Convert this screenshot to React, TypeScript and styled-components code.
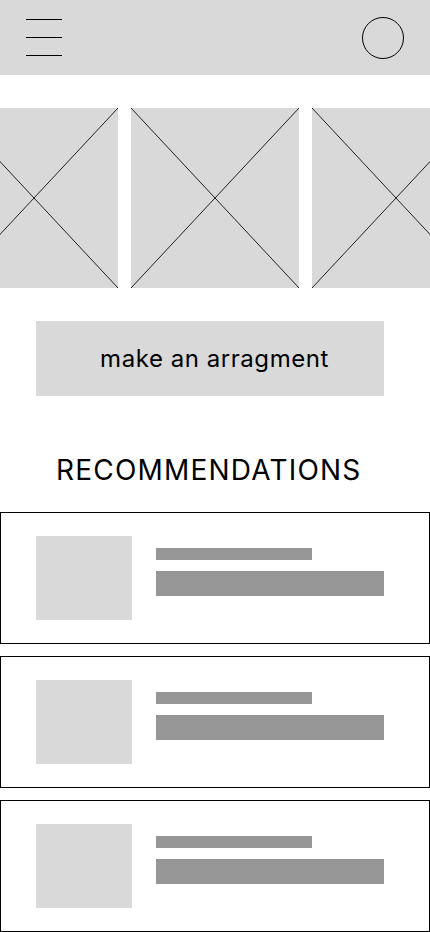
import React from "react";
import styled, { createGlobalStyle } from "styled-components";

const Global = createGlobalStyle`
  html, body { margin: 0; padding: 0; background: #ffffff; }
  body { font-family: Inter, "Noto Sans", sans-serif; color: #000; }
  * { box-sizing: border-box; }
`;

const Page = styled.div`
  width: 430px;
  display: flex;
  flex-direction: column;
`;

const Header = styled.header`
  height: 75px;
  background: #d9d9d9;
  display: flex;
  align-items: center;
  justify-content: space-between;
  padding: 0 26px;
`;

const Burger = styled.div`
  width: 36px;
  display: flex;
  flex-direction: column;
  gap: 17px;
`;

const BurgerLine = styled.span`
  display: block;
  height: 1px;
  background: #000;
`;

const Avatar = styled.div`
  width: 42px;
  height: 42px;
  border: 1px solid #000;
  border-radius: 50%;
  margin-top: 1px;
`;

const Carousel = styled.div`
  margin-top: 33px;
  display: flex;
  justify-content: center;
  gap: 13px;
  overflow: hidden;
`;

const Slide = styled.div`
  flex: 0 0 168px;
  height: 180px;
  background: #d9d9d9;
`;

const Cross = styled.svg`
  display: block;
  width: 100%;
  height: 100%;
`;

const ActionWrap = styled.div`
  margin-top: 33px;
  display: flex;
  padding-left: 36px;
`;

const ActionButton = styled.button`
  width: 348px;
  height: 75px;
  background: #d9d9d9;
  border: none;
  padding: 0 0 0 9px;
  font-family: Inter, "Noto Sans", sans-serif;
  font-size: 24px;
  letter-spacing: 0.55px;
  color: #000;
  display: flex;
  align-items: center;
  justify-content: center;
`;

const Title = styled.h2`
  margin: 57px 0 0 0;
  padding-left: 56px;
  font-family: Inter, "Noto Sans", sans-serif;
  font-weight: 400;
  font-size: 28px;
  letter-spacing: 1.2px;
  line-height: 34px;
`;

const List = styled.div`
  margin-top: 25px;
  display: flex;
  flex-direction: column;
  gap: 12px;
`;

const Card = styled.div`
  height: 132px;
  border: 1px solid #000;
  display: flex;
  align-items: flex-start;
  padding: 23px 0 0 35px;
  gap: 24px;
`;

const Thumb = styled.div`
  width: 96px;
  height: 84px;
  background: #d9d9d9;
`;

const Lines = styled.div`
  display: flex;
  flex-direction: column;
  padding-top: 12px;
  gap: 11px;
`;

const Bar = styled.div<{ $w: number; $h: number }>`
  width: ${(p) => p.$w}px;
  height: ${(p) => p.$h}px;
  background: #969696;
`;

const Placeholder = () => (
  <Cross viewBox="0 0 168 180" preserveAspectRatio="none">
    <line x1="0" y1="0" x2="168" y2="180" stroke="#222" strokeWidth="1" />
    <line x1="168" y1="0" x2="0" y2="180" stroke="#222" strokeWidth="1" />
  </Cross>
);

export default function App() {
  return (
    <Page>
      <Global />
      <Header>
        <Burger>
          <BurgerLine />
          <BurgerLine />
          <BurgerLine />
        </Burger>
        <Avatar />
      </Header>
      <Carousel>
        {[0, 1, 2].map((i) => (
          <Slide key={i}>
            <Placeholder />
          </Slide>
        ))}
      </Carousel>
      <ActionWrap>
        <ActionButton>make an arragment</ActionButton>
      </ActionWrap>
      <Title>RECOMMENDATIONS</Title>
      <List>
        {[0, 1, 2].map((i) => (
          <Card key={i}>
            <Thumb />
            <Lines>
              <Bar $w={156} $h={12} />
              <Bar $w={228} $h={25} />
            </Lines>
          </Card>
        ))}
      </List>
    </Page>
  );
}
